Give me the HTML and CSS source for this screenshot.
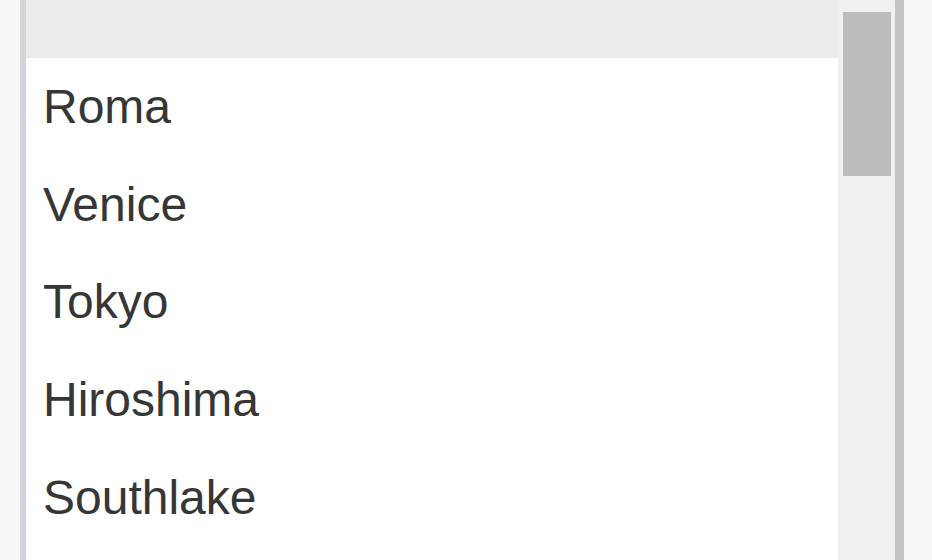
FILE: index.html
```html
<!DOCTYPE html>
<html>
<head>
<meta charset="utf-8">
<link rel="stylesheet" href="styles.css">
</head>
<body>
<div class="frame">
  <div class="side-left"></div>
  <div class="listbox">
    <div class="list">
      <div class="header"></div>
      <div class="item">Roma</div>
      <div class="item">Venice</div>
      <div class="item">Tokyo</div>
      <div class="item">Hiroshima</div>
      <div class="item">Southlake</div>
    </div>
    <div class="scrollbar"><div class="thumb"></div></div>
  </div>
  <div class="side-right"></div>
</div>
</body>
</html>
```
FILE: styles.css
```css
html, body {
  margin: 0;
  padding: 0;
  width: 932px;
  height: 560px;
  overflow: hidden;
  background: #f7f8f9;
}
.frame {
  display: flex;
  height: 560px;
}
.side-left {
  width: 20px;
  flex: none;
  background: #f7f8f9;
}
.listbox {
  display: flex;
  flex: none;
  width: 869px;
  border-left: 6px solid #d3d6da;
  border-right: 9px solid #c3c5c8;
  background: #ffffff;
  overflow: hidden;
}
.list {
  width: 812px;
  flex: none;
  display: flex;
  flex-direction: column;
}
.header {
  height: 58px;
  flex: none;
  background: #e9ebed;
}
.item {
  flex: none;
  height: 97.6px;
  display: flex;
  align-items: center;
  padding-left: 17px;
  font-family: "Liberation Sans", Arial, sans-serif;
  font-size: 48px;
  color: #363636;
}
.scrollbar {
  width: 57px;
  flex: none;
  background: #eff0f2;
  display: flex;
  flex-direction: column;
  padding-top: 12px;
  align-items: center;
}
.thumb {
  width: 48px;
  height: 164px;
  background: #bcbcbc;
  margin-left: 1px;
}
.side-right {
  flex: 1;
  background: #f7f8f9;
}
```
